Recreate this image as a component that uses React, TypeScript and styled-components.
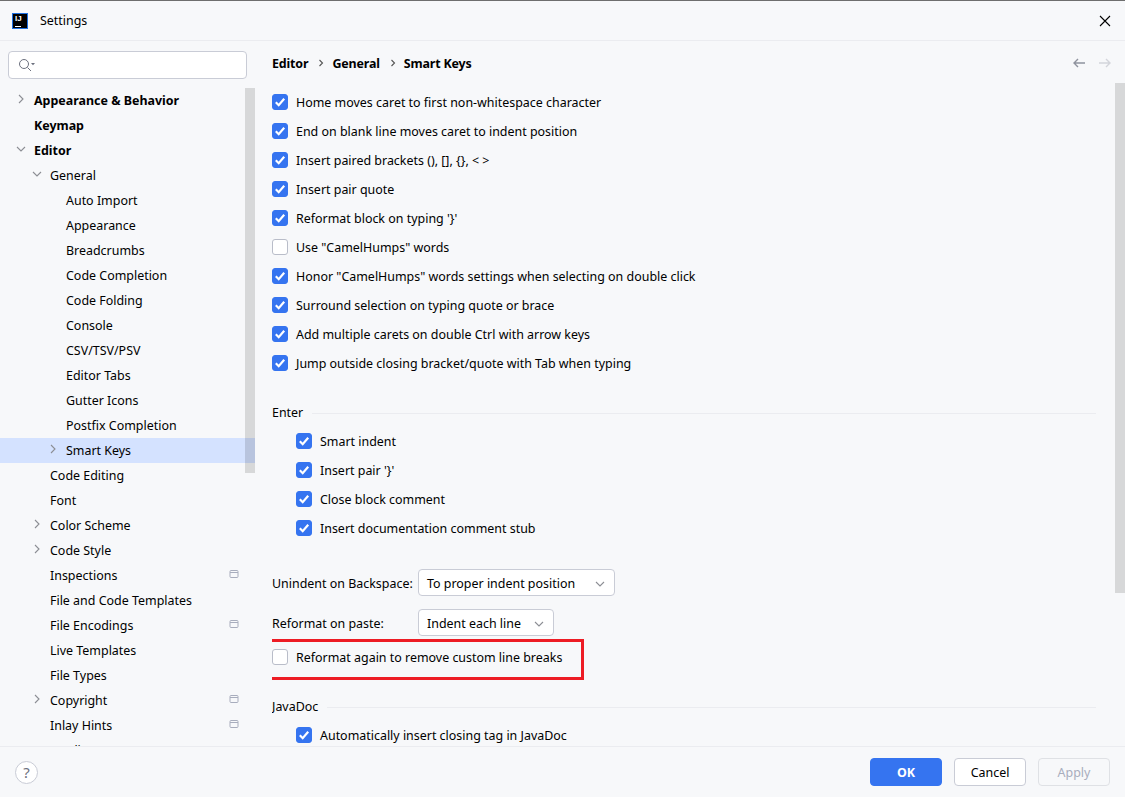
import React from "react";
import styled, { createGlobalStyle } from "styled-components";

type TreeItem = {
  label: string;
  level: number;
  bold?: boolean;
  arrow?: "right" | "down";
  selected?: boolean;
  project?: boolean;
};

const treeItems: TreeItem[] = [
  { label: "Appearance & Behavior", level: 0, bold: true, arrow: "right" },
  { label: "Keymap", level: 0, bold: true },
  { label: "Editor", level: 0, bold: true, arrow: "down" },
  { label: "General", level: 1, arrow: "down" },
  { label: "Auto Import", level: 2 },
  { label: "Appearance", level: 2 },
  { label: "Breadcrumbs", level: 2 },
  { label: "Code Completion", level: 2 },
  { label: "Code Folding", level: 2 },
  { label: "Console", level: 2 },
  { label: "CSV/TSV/PSV", level: 2 },
  { label: "Editor Tabs", level: 2 },
  { label: "Gutter Icons", level: 2 },
  { label: "Postfix Completion", level: 2 },
  { label: "Smart Keys", level: 2, arrow: "right", selected: true },
  { label: "Code Editing", level: 1 },
  { label: "Font", level: 1 },
  { label: "Color Scheme", level: 1, arrow: "right" },
  { label: "Code Style", level: 1, arrow: "right" },
  { label: "Inspections", level: 1, project: true },
  { label: "File and Code Templates", level: 1 },
  { label: "File Encodings", level: 1, project: true },
  { label: "Live Templates", level: 1 },
  { label: "File Types", level: 1 },
  { label: "Copyright", level: 1, arrow: "right", project: true },
  { label: "Inlay Hints", level: 1, project: true },
  { label: "Duplicates", level: 1 },
];

const topOptions: [string, boolean][] = [
  ["Home moves caret to first non-whitespace character", true],
  ["End on blank line moves caret to indent position", true],
  ["Insert paired brackets (), [], {}, < >", true],
  ["Insert pair quote", true],
  ["Reformat block on typing '}'", true],
  ['Use "CamelHumps" words', false],
  ['Honor "CamelHumps" words settings when selecting on double click', true],
  ["Surround selection on typing quote or brace", true],
  ["Add multiple carets on double Ctrl with arrow keys", true],
  ["Jump outside closing bracket/quote with Tab when typing", true],
];

const enterOptions = [
  "Smart indent",
  "Insert pair '}'",
  "Close block comment",
  "Insert documentation comment stub",
];

const GlobalStyle = createGlobalStyle`
  html, body {
    margin: 0;
    padding: 0;
    background: #f7f8fa;
  }
  * {
    box-sizing: border-box;
  }
`;

const Window = styled.div`
  width: 1125px;
  height: 797px;
  display: flex;
  flex-direction: column;
  overflow: hidden;
  background: #f7f8fa;
  color: #000;
  font-family: "Noto Sans", "Liberation Sans", sans-serif;
  font-size: 12.45px;
  border-top: 1px solid #6e6e6e;
`;

const TitleBar = styled.div`
  height: 40px;
  flex: none;
  display: flex;
  align-items: center;
  padding: 0 14px 0 12px;
  border-bottom: 1px solid #ebecf0;
`;

const Logo = styled.div`
  width: 16px;
  height: 16px;
  background: #000;
  border: 1px solid #1f6fe0;
  color: #fff;
  font-family: "Liberation Sans", sans-serif;
  font-size: 8px;
  font-weight: 700;
  line-height: 8px;
  padding: 1px 0 0 2px;
  position: relative;

  &::after {
    content: "";
    position: absolute;
    left: 2px;
    bottom: 1px;
    width: 6px;
    height: 1px;
    background: #fff;
  }
`;

const TitleText = styled.span`
  margin-left: 12px;
  flex: 1;
`;

const Body = styled.div`
  flex: 1;
  min-height: 0;
  display: flex;
`;

const Sidebar = styled.div`
  width: 255px;
  flex: none;
  display: flex;
  flex-direction: column;
  position: relative;
`;

const SearchBox = styled.div`
  margin: 10px 8px 9px 8px;
  height: 28px;
  flex: none;
  border: 1px solid #c9ccd6;
  border-radius: 4px;
  background: #fff;
  display: flex;
  align-items: center;
  padding-left: 9px;
`;

const Tree = styled.div`
  flex: 1;
  min-height: 0;
  overflow: hidden;
`;

const TreeRow = styled.div<{ $level: number; $selected?: boolean; $bold?: boolean }>`
  height: 25px;
  display: flex;
  align-items: center;
  position: relative;
  padding-left: ${(p) => 34 + p.$level * 16}px;
  background: ${(p) => (p.$selected ? "#d4e2ff" : "transparent")};
  font-weight: ${(p) => (p.$bold ? 700 : 400)};
  white-space: nowrap;
`;

const TreeArrow = styled.svg<{ $level: number }>`
  position: absolute;
  left: ${(p) => 16 + p.$level * 16}px;
  top: 6px;
  width: 10px;
  height: 10px;
  fill: none;
  stroke: #8c8e94;
  stroke-width: 1.1;
`;

const ProjectIcon = styled.svg`
  position: absolute;
  left: 229px;
  top: 6px;
  width: 10px;
  height: 10px;
  fill: none;
  stroke: #a8adbd;
  stroke-width: 1;
`;

const ScrollThumb = styled.div<{ $top: number; $height: number; $right: number }>`
  position: absolute;
  right: ${(p) => p.$right}px;
  top: ${(p) => p.$top}px;
  width: 10px;
  height: ${(p) => p.$height}px;
  background: rgba(0, 0, 0, 0.13);
`;

const Main = styled.div`
  flex: 1;
  min-width: 0;
  position: relative;
  display: flex;
  flex-direction: column;
  padding-left: 17px;
`;

const Header = styled.div`
  height: 42px;
  flex: none;
  display: flex;
  align-items: center;
  padding: 2px 13px 0 0;
`;

const Crumb = styled.span`
  font-weight: 700;
  letter-spacing: -0.15px;
`;

const CrumbSep = styled.svg`
  width: 8px;
  height: 8px;
  margin: 0 7px 0 9px;
  fill: none;
  stroke: #555;
  stroke-width: 1.1;
`;

const NavIcons = styled.div`
  margin-left: auto;
  display: flex;
  gap: 12px;
`;

const NavIcon = styled.svg<{ $dim?: boolean }>`
  width: 14px;
  height: 14px;
  fill: none;
  stroke: ${(p) => (p.$dim ? "#d3d5db" : "#8f939e")};
  stroke-width: 1.4;
`;

const Content = styled.div`
  flex: 1;
  min-height: 0;
  overflow: hidden;
  padding: 4px 29px 0 0;
`;

const CheckRow = styled.div<{ $indent?: boolean }>`
  height: 29px;
  display: flex;
  align-items: center;
  gap: 8px;
  padding-left: ${(p) => (p.$indent ? "24px" : "0")};
  white-space: nowrap;
`;

const RowText = styled.span`
  padding-top: 2px;
`;

const Box = styled.span<{ $checked: boolean }>`
  width: 16px;
  height: 16px;
  flex: none;
  border-radius: 3px;
  display: flex;
  align-items: center;
  justify-content: center;
  background: ${(p) => (p.$checked ? "#3574f0" : "#fff")};
  border: 1px solid ${(p) => (p.$checked ? "#3574f0" : "#b9bdc9")};
`;

const CheckMark = styled.svg`
  width: 12px;
  height: 12px;
  fill: none;
  stroke: #fff;
  stroke-width: 2.2;
`;

const SectionTitle = styled.div<{ $top: number }>`
  display: flex;
  align-items: center;
  gap: 9px;
  height: 20px;
  margin-top: ${(p) => p.$top}px;
  margin-bottom: 4px;

  &::after {
    content: "";
    flex: 1;
    height: 1px;
    margin-top: 2px;
    background: #ebecf0;
  }
`;

const FieldRow = styled.div<{ $top: number }>`
  display: flex;
  align-items: center;
  height: 27px;
  margin-top: ${(p) => p.$top}px;
  white-space: nowrap;
`;

const FieldLabel = styled.label`
  width: 146px;
  flex: none;
  padding-top: 2px;
`;

const Select = styled.div<{ $width: number }>`
  width: ${(p) => p.$width}px;
  height: 27px;
  background: #fff;
  border: 1px solid #c9ccd6;
  border-radius: 4px;
  display: flex;
  align-items: center;
  justify-content: space-between;
  padding: 2px 9px 0 8px;
`;

const SelectArrow = styled.svg`
  width: 10px;
  height: 10px;
  fill: none;
  stroke: #8c8e94;
  stroke-width: 1.1;
`;

const HighlightWrap = styled.div`
  position: relative;
  margin-top: 6px;
`;

const Highlight = styled.div`
  position: absolute;
  left: -12px;
  top: -3px;
  width: 324px;
  height: 41px;
  border: 3px solid #ed1c24;
  pointer-events: none;
`;

const Footer = styled.div`
  height: 51px;
  flex: none;
  border-top: 1px solid #ebecf0;
  display: flex;
  align-items: center;
  padding: 0 15px;
  gap: 12px;
  position: relative;
`;

const HelpButton = styled.div`
  width: 23px;
  height: 23px;
  border-radius: 50%;
  border: 1px solid #c9ccd6;
  background: #fff;
  color: #6c707e;
  font-size: 15px;
  display: flex;
  align-items: center;
  justify-content: center;
  margin-right: auto;
`;

const Button = styled.button<{ $kind: "primary" | "plain" | "disabled" }>`
  width: 72px;
  height: 28px;
  border-radius: 4px;
  font: inherit;
  padding: 0;
  font-weight: ${(p) => (p.$kind === "primary" ? 700 : 400)};
  color: ${(p) =>
    p.$kind === "primary" ? "#fff" : p.$kind === "plain" ? "#000" : "#a8adbd"};
  background: ${(p) => (p.$kind === "primary" ? "#3574f0" : p.$kind === "plain" ? "#fff" : "transparent")};
  border: 1px solid
    ${(p) =>
      p.$kind === "primary" ? "#3574f0" : p.$kind === "plain" ? "#c9ccd6" : "#dfe1e5"};
`;

function Check({ checked }: { checked: boolean }) {
  return (
    <Box $checked={checked}>
      {checked && (
        <CheckMark viewBox="0 0 12 12">
          <path d="M1.8 6.3 4.7 9.2 10.2 2.8" />
        </CheckMark>
      )}
    </Box>
  );
}

function Chevron() {
  return (
    <SelectArrow viewBox="0 0 10 10">
      <path d="M1 3 5 7 9 3" />
    </SelectArrow>
  );
}

export default function App() {
  return (
    <Window>
      <GlobalStyle />
      <TitleBar>
        <Logo>IJ</Logo>
        <TitleText>Settings</TitleText>
        <svg width="12" height="12" viewBox="0 0 12 12" fill="none" stroke="#000" strokeWidth="1.1">
          <path d="M1 1 11 11M11 1 1 11" />
        </svg>
      </TitleBar>
      <Body>
        <Sidebar>
          <SearchBox>
            <svg width="18" height="14" viewBox="0 0 18 14" fill="none" stroke="#6c707e" strokeWidth="1">
              <circle cx="6" cy="6" r="4.5" />
              <path d="M9.5 9.5 13 13" />
              <path d="M13 5h4l-2 2.2z" fill="#6c707e" stroke="none" />
            </svg>
          </SearchBox>
          <Tree>
            {treeItems.map((item) => (
              <TreeRow
                key={item.label}
                $level={item.level}
                $selected={item.selected}
                $bold={item.bold}
              >
                {item.arrow && (
                  <TreeArrow $level={item.level} viewBox="0 0 10 10">
                    <path d={item.arrow === "right" ? "M3 1 7 5 3 9" : "M1 3 5 7 9 3"} />
                  </TreeArrow>
                )}
                {item.label}
                {item.project && (
                  <ProjectIcon viewBox="0 0 10 10">
                    <rect x="1" y="1.5" width="8" height="7" rx="1" />
                    <path d="M1 3.5h8" />
                  </ProjectIcon>
                )}
              </TreeRow>
            ))}
          </Tree>
          <ScrollThumb $top={47} $height={385} $right={0} />
        </Sidebar>
        <Main>
          <Header>
            <Crumb>Editor</Crumb>
            <CrumbSep viewBox="0 0 8 8">
              <path d="M2.5 1 5.5 4 2.5 7" />
            </CrumbSep>
            <Crumb>General</Crumb>
            <CrumbSep viewBox="0 0 8 8">
              <path d="M2.5 1 5.5 4 2.5 7" />
            </CrumbSep>
            <Crumb>Smart Keys</Crumb>
            <NavIcons>
              <NavIcon viewBox="0 0 14 14">
                <path d="M13 7H2M6 3 2 7l4 4" />
              </NavIcon>
              <NavIcon $dim viewBox="0 0 14 14">
                <path d="M1 7h11M8 3l4 4-4 4" />
              </NavIcon>
            </NavIcons>
          </Header>
          <Content>
            {topOptions.map(([label, checked]) => (
              <CheckRow key={label}>
                <Check checked={checked} />
                <RowText>{label}</RowText>
              </CheckRow>
            ))}
            <SectionTitle $top={25}>Enter</SectionTitle>
            {enterOptions.map((label) => (
              <CheckRow key={label} $indent>
                <Check checked />
                <RowText>{label}</RowText>
              </CheckRow>
            ))}
            <FieldRow $top={27}>
              <FieldLabel>Unindent on Backspace:</FieldLabel>
              <Select $width={197}>
                To proper indent position
                <Chevron />
              </Select>
            </FieldRow>
            <FieldRow $top={13}>
              <FieldLabel>Reformat on paste:</FieldLabel>
              <Select $width={136}>
                Indent each line
                <Chevron />
              </Select>
            </FieldRow>
            <HighlightWrap>
              <CheckRow>
                <Check checked={false} />
                <RowText>Reformat again to remove custom line breaks</RowText>
              </CheckRow>
              <Highlight />
            </HighlightWrap>
            <SectionTitle $top={25}>JavaDoc</SectionTitle>
            <CheckRow $indent>
              <Check checked />
              <RowText>Automatically insert closing tag in JavaDoc</RowText>
            </CheckRow>
          </Content>
          <ScrollThumb $top={42} $height={510} $right={0} />
        </Main>
      </Body>
      <Footer>
        <HelpButton>?</HelpButton>
        <Button $kind="primary">OK</Button>
        <Button $kind="plain">Cancel</Button>
        <Button $kind="disabled">Apply</Button>
      </Footer>
    </Window>
  );
}
